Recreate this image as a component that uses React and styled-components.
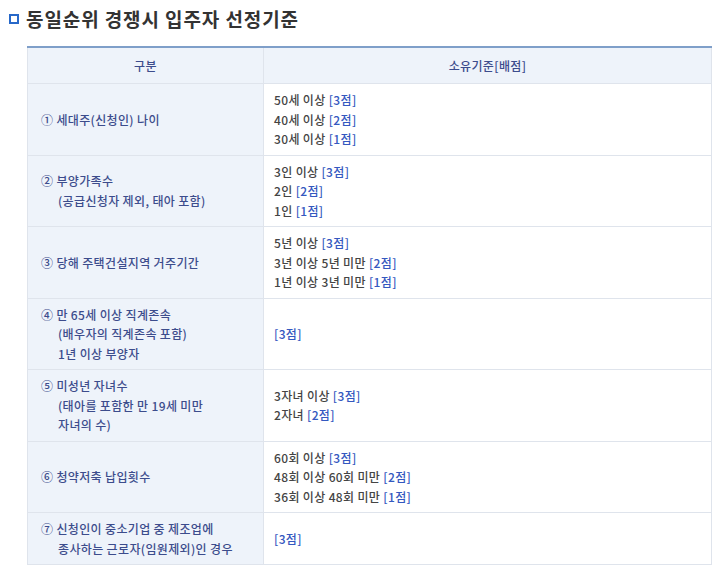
import styled, { createGlobalStyle } from "styled-components";

const Global = createGlobalStyle`
  body {
    margin: 0;
    background: #fff;
    font-family: "Noto Sans CJK KR", "Noto Sans", sans-serif;
  }
`;

const Page = styled.div`
  padding: 5px 0 0 9px;
`;

const Title = styled.h2`
  display: flex;
  align-items: center;
  gap: 7px;
  margin: 0;
  font-size: 19px;
  font-weight: 700;
  color: #333;
  line-height: 27px;
  letter-spacing: 0.9px;
`;

const Bullet = styled.span`
  display: inline-block;
  width: 6px;
  height: 6px;
  border: 2px solid #2768c9;
  background: #fff;
`;

const Table = styled.table`
  margin: 14px 0 0 18px;
  width: 685px;
  border-collapse: collapse;
  border-top: 2px solid #7f9fc9;
  font-size: 12px;
  font-weight: 500;
  line-height: 19.5px;
  letter-spacing: 0.35px;
`;

const Th = styled.th`
  height: 35px;
  padding: 0;
  background: #eef3fa;
  color: #3c4c8c;
  font-weight: 500;
  font-size: 12px;
  border: 1px solid #dfe4ec;
  border-top: none;
  width: ${(p) => p.$w || "auto"};
`;

const Label = styled.td`
  background: #eef3fa;
  color: #3c4c8c;
  padding: 6px 12px 6px 13px;
  border: 1px solid #dfe4ec;
  vertical-align: middle;
`;

const Value = styled.td`
  background: #fff;
  color: #444;
  padding: 6px 10px 6px 10px;
  border: 1px solid #dfe4ec;
  vertical-align: middle;
`;

const Line = styled.div`
  padding-left: ${(p) => (p.$sub ? "17px" : "0")};
  white-space: nowrap;
`;

const Point = styled.span`
  color: #3458c0;
`;

const rows = [
  {
    label: ["① 세대주(신청인) 나이"],
    values: [["50세 이상", "3점"], ["40세 이상", "2점"], ["30세 이상", "1점"]],
  },
  {
    label: ["② 부양가족수", "(공급신청자 제외, 태아 포함)"],
    values: [["3인 이상", "3점"], ["2인", "2점"], ["1인", "1점"]],
  },
  {
    label: ["③ 당해 주택건설지역 거주기간"],
    values: [["5년 이상", "3점"], ["3년 이상 5년 미만", "2점"], ["1년 이상 3년 미만", "1점"]],
  },
  {
    label: ["④ 만 65세 이상 직계존속", "(배우자의 직계존속 포함)", "1년 이상 부양자"],
    values: [["", "3점"]],
  },
  {
    label: ["⑤ 미성년 자녀수", "(태아를 포함한 만 19세 미만", "자녀의 수)"],
    values: [["3자녀 이상", "3점"], ["2자녀", "2점"]],
  },
  {
    label: ["⑥ 청약저축 납입횟수"],
    values: [["60회 이상", "3점"], ["48회 이상 60회 미만", "2점"], ["36회 이상 48회 미만", "1점"]],
  },
  {
    label: ["⑦ 신청인이 중소기업 중 제조업에", "종사하는 근로자(임원제외)인 경우"],
    values: [["", "3점"]],
  },
];

export default function App() {
  return (
    <Page>
      <Global />
      <Title>
        <Bullet />
        동일순위 경쟁시 입주자 선정기준
      </Title>
      <Table>
        <thead>
          <tr>
            <Th $w="235px">구분</Th>
            <Th>소유기준[배점]</Th>
          </tr>
        </thead>
        <tbody>
          {rows.map((r, i) => (
            <tr key={i}>
              <Label>
                {r.label.map((l, j) => (
                  <Line key={j} $sub={j > 0}>{l}</Line>
                ))}
              </Label>
              <Value>
                {r.values.map(([t, p], j) => (
                  <Line key={j}>
                    {t ? `${t} ` : ""}
                    <Point>[{p}]</Point>
                  </Line>
                ))}
              </Value>
            </tr>
          ))}
        </tbody>
      </Table>
    </Page>
  );
}
